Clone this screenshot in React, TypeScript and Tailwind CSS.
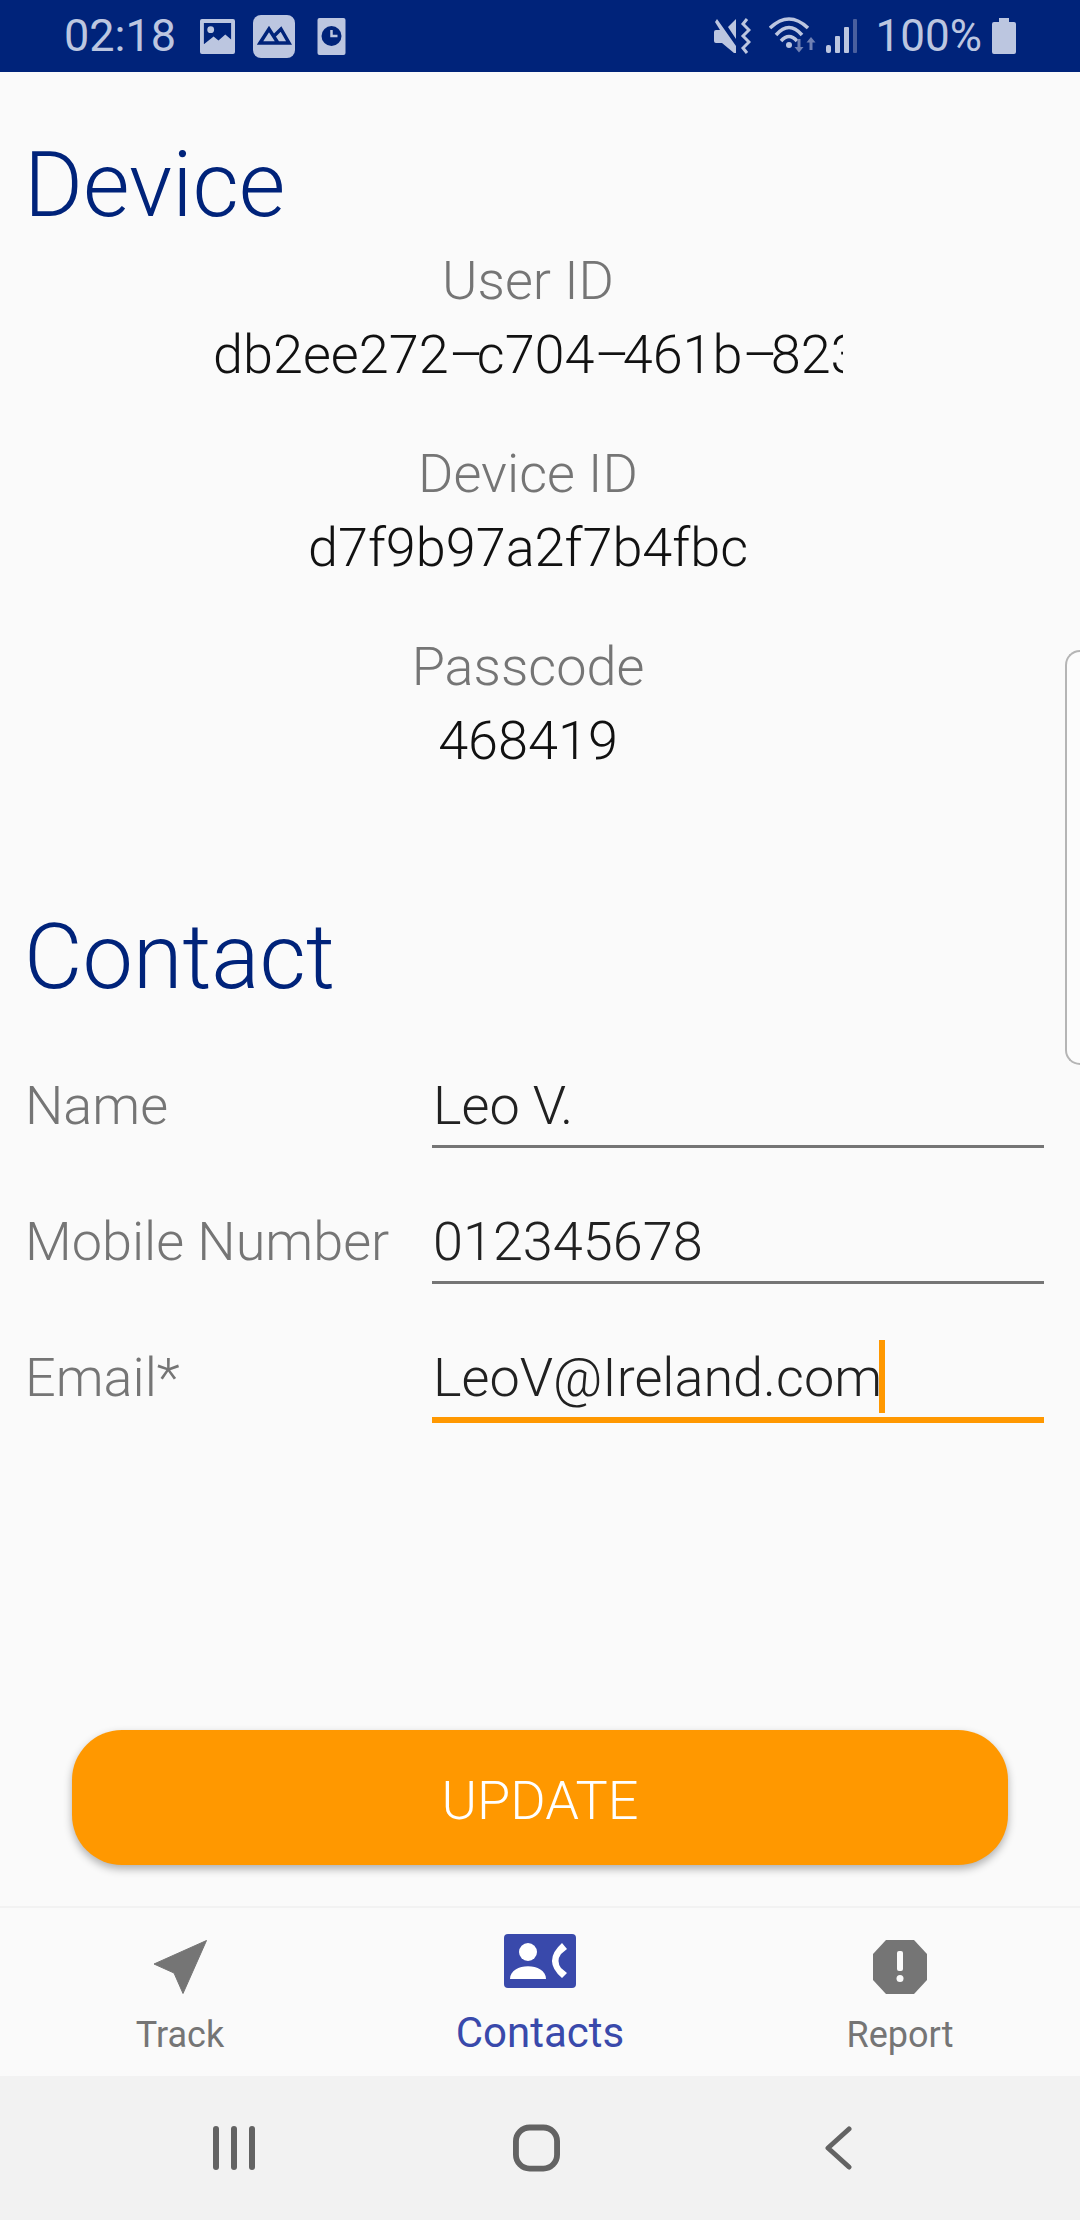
import React from 'react';

const Info = ({ label, children }: { label: string; children: React.ReactNode }) => (
  <div className="flex h-[193px] flex-col items-center">
    <div className="text-[54px] leading-[64px] font-light text-[#757575]">{label}</div>
    <div className="w-[630px] h-[83px] overflow-hidden whitespace-nowrap text-center text-[54px] leading-[83px] font-light text-[#111111]">
      {children}
    </div>
  </div>
);

const Dash = () => <span className="tracking-[-7px]">–</span>;

const Field = ({ label, value, focused }: { label: string; value: string; focused?: boolean }) => (
  <div className="flex h-[136px] items-start">
    <div className="w-[432px] pl-[25px] pt-[16px] text-[54px] leading-[72px] font-light text-[#757575]">{label}</div>
    <div
      className={
        focused
          ? 'relative h-[97px] w-[612px] border-b-[6px] border-[#ff9800] pl-[1px] pt-[16px]'
          : 'relative h-[94px] w-[612px] border-b-[3px] border-[#757575] pl-[1px] pt-[16px]'
      }
    >
      <span className="text-[54px] leading-[72px] font-light text-[#212121]">{value}</span>
      {focused && <span className="absolute left-[447px] top-[14px] h-[73px] w-[6px] bg-[#ff9800]" />}
    </div>
  </div>
);

const StatusLeft = () => (
  <div className="flex items-center">
    <span className="ml-[64px] text-[45px] leading-[72px] text-[#bcc6e0]">02:18</span>
    <svg className="ml-[24px]" width="35" height="35" viewBox="0 0 36 36">
      <path fill="#bcc6e0" fillRule="evenodd" d="M2 0h32a2 2 0 0 1 2 2v32a2 2 0 0 1-2 2H2a2 2 0 0 1-2-2V2a2 2 0 0 1 2-2zM4 4v22l10-8 5 4 7-6 6 5V4z" />
      <circle cx="11" cy="11" r="3.5" fill="#bcc6e0" />
    </svg>
    <svg className="ml-[18px]" width="42" height="43" viewBox="0 0 42 43">
      <rect width="42" height="43" rx="8" fill="#bcc6e0" />
      <path fill="none" stroke="#00237a" strokeWidth="3.5" d="M7 28 16 14l9 14zM21 21l7-7 8 14H24" />
    </svg>
    <svg className="ml-[22px]" width="29" height="37" viewBox="0 0 28 37">
      <rect width="28" height="37" rx="2" fill="#bcc6e0" />
      <circle cx="14" cy="18" r="10" fill="#00237a" />
      <path d="M14 12v6h6" fill="none" stroke="#bcc6e0" strokeWidth="2.5" />
    </svg>
  </div>
);

const StatusRight = () => (
  <div className="flex items-center pr-[64px]">
    <svg width="37" height="36" viewBox="0 0 37 36">
      <path fill="#bcc6e0" d="M3 1l19 27v7h-2L8 25H2q-2 0-2-2v-9q0-2 2-2h4L1 4zM14 9l8-8v20z" />
      <path fill="none" stroke="#bcc6e0" strokeWidth="3" d="M33 1l-4 5 6 6-6 6 6 6-6 6 4 5" />
    </svg>
    <svg className="ml-[18px]" width="47" height="38" viewBox="0 0 47 38">
      <path fill="none" stroke="#bcc6e0" strokeWidth="3.5" d="M1 11Q20-7 39 11M7 18q13-15 26 0M12 24q8-9 16 0" />
      <circle cx="20" cy="28" r="3" fill="#bcc6e0" />
      <path fill="#6f80b3" d="M28.5 22h3v8h3l-4.5 5.5L25.5 30h3zM42 20l4.5 5.5h-3V33h-3v-7.5h-3z" />
    </svg>
    <svg className="ml-[10px]" width="32" height="34" viewBox="0 0 32 34">
      <rect x="0" y="26" width="5" height="8" rx="2" fill="#bcc6e0" />
      <rect x="9" y="17" width="5" height="17" rx="1" fill="#bcc6e0" />
      <rect x="18" y="8" width="5" height="26" rx="1" fill="#bcc6e0" />
      <rect x="27" y="0" width="4" height="34" rx="1" fill="#4a5f9e" />
    </svg>
    <span className="ml-[18px] text-[44px] leading-[72px] text-[#bcc6e0]">100%</span>
    <svg className="ml-[10px]" width="24" height="36" viewBox="0 0 24 36">
      <path fill="#bcc6e0" d="M7 0h10v4h5a2 2 0 0 1 2 2v28a2 2 0 0 1-2 2H2a2 2 0 0 1-2-2V6a2 2 0 0 1 2-2h5z" />
    </svg>
  </div>
);

const NavItem = ({ label, active, children }: { label: string; active?: boolean; children: React.ReactNode }) => (
  <div className="flex w-[360px] flex-col items-center">
    {children}
    <span
      className={
        active
          ? 'mt-[21px] text-[42px] leading-[48px] text-[#3949ab]'
          : 'mt-[18px] text-[36px] leading-[46px] text-[#757575]'
      }
    >
      {label}
    </span>
  </div>
);

export default function App() {
  return (
    <div className="flex h-[2220px] w-[1080px] flex-col overflow-hidden bg-[#fafafa] font-[Roboto,sans-serif]">
      <div className="flex h-[72px] shrink-0 items-center justify-between bg-[#00237a]">
        <StatusLeft />
        <StatusRight />
      </div>

      <div className="relative flex-1">
        <h1 className="pl-[24px] pt-[59px] text-[90px] leading-[110px] font-light text-[#00237a]">Device</h1>
        <div className="mt-[8px] flex w-[1056px] flex-col">
          <Info label="User ID">
            db2ee272<Dash />c704<Dash />461b<Dash />823c
          </Info>
          <Info label="Device ID">d7f9b97a2f7b4fbc</Info>
          <Info label="Passcode">468419</Info>
        </div>
        <h1 className="pl-[24px] pt-[75px] text-[90px] leading-[110px] font-light text-[#00237a]">Contact</h1>
        <div className="mt-[41px] flex flex-col">
          <Field label="Name" value="Leo V." />
          <Field label="Mobile Number" value="012345678" />
          <Field label="Email*" value="LeoV@Ireland.com" focused />
        </div>
        <button className="absolute left-[72px] top-[1658px] h-[135px] w-[936px] rounded-[50px] bg-[#ff9800] pt-[6px] text-[54px] font-light text-white shadow-[0_4px_8px_rgba(0,0,0,0.3)]">
          UPDATE
        </button>
        <div className="absolute right-0 top-[578px] h-[415px] w-[15px] rounded-l-[15px] border-y-2 border-l-2 border-[#b5b5b5] bg-[#fcfcfc]" />
      </div>

      <div className="flex h-[170px] shrink-0 items-start border-t-2 border-[#f2f2f2] bg-[#fafafa] pt-[28px]">
        <NavItem label="Track">
          <svg className="mt-[4px]" width="54" height="54" viewBox="0 0 54 54">
            <path fill="#757575" stroke="#757575" strokeWidth="1" strokeLinejoin="round" d="M53.5 .5 1 24l20 9 9 20.5z" />
          </svg>
        </NavItem>
        <NavItem label="Contacts" active>
          <svg className="mt-[-2px]" width="72" height="54" viewBox="0 0 72 54">
            <rect width="72" height="54" rx="4" fill="#3949ab" />
            <circle cx="24" cy="18" r="9" fill="#fff" />
            <path fill="#fff" d="M6 45c0-17 36-17 36 0z" />
            <path fill="#fff" d="M58 9l5 6-6 5q-5 7 0 14l6 5-5 5Q38 27 58 9z" />
          </svg>
        </NavItem>
        <NavItem label="Report">
          <svg className="mt-[4px]" width="54" height="54" viewBox="0 0 54 54">
            <path fill="#757575" d="M13 0h28l13 14v26L41 54H13L0 40V14z" />
            <rect x="24" y="11" width="6" height="20" rx="2" fill="#fafafa" />
            <circle cx="27" cy="38.5" r="3.5" fill="#fafafa" />
          </svg>
        </NavItem>
      </div>

      <div className="flex h-[144px] shrink-0 items-center bg-[#f2f2f2] pl-[213px]">
        <svg width="42" height="44" viewBox="0 0 42 44">
          <rect x="0" width="6" height="44" rx="3" fill="#636363" />
          <rect x="18" width="6" height="44" rx="3" fill="#636363" />
          <rect x="36" width="6" height="44" rx="3" fill="#636363" />
        </svg>
        <svg className="ml-[258px]" width="47" height="48" viewBox="0 0 48 48">
          <rect x="3" y="3" width="42" height="42" rx="14" fill="none" stroke="#636363" strokeWidth="6" />
        </svg>
        <svg className="ml-[265px]" width="27" height="44" viewBox="0 0 27 44">
          <path d="M24 3 3 22l21 19" fill="none" stroke="#636363" strokeWidth="5" strokeLinecap="round" strokeLinejoin="round" />
        </svg>
      </div>
    </div>
  );
}
